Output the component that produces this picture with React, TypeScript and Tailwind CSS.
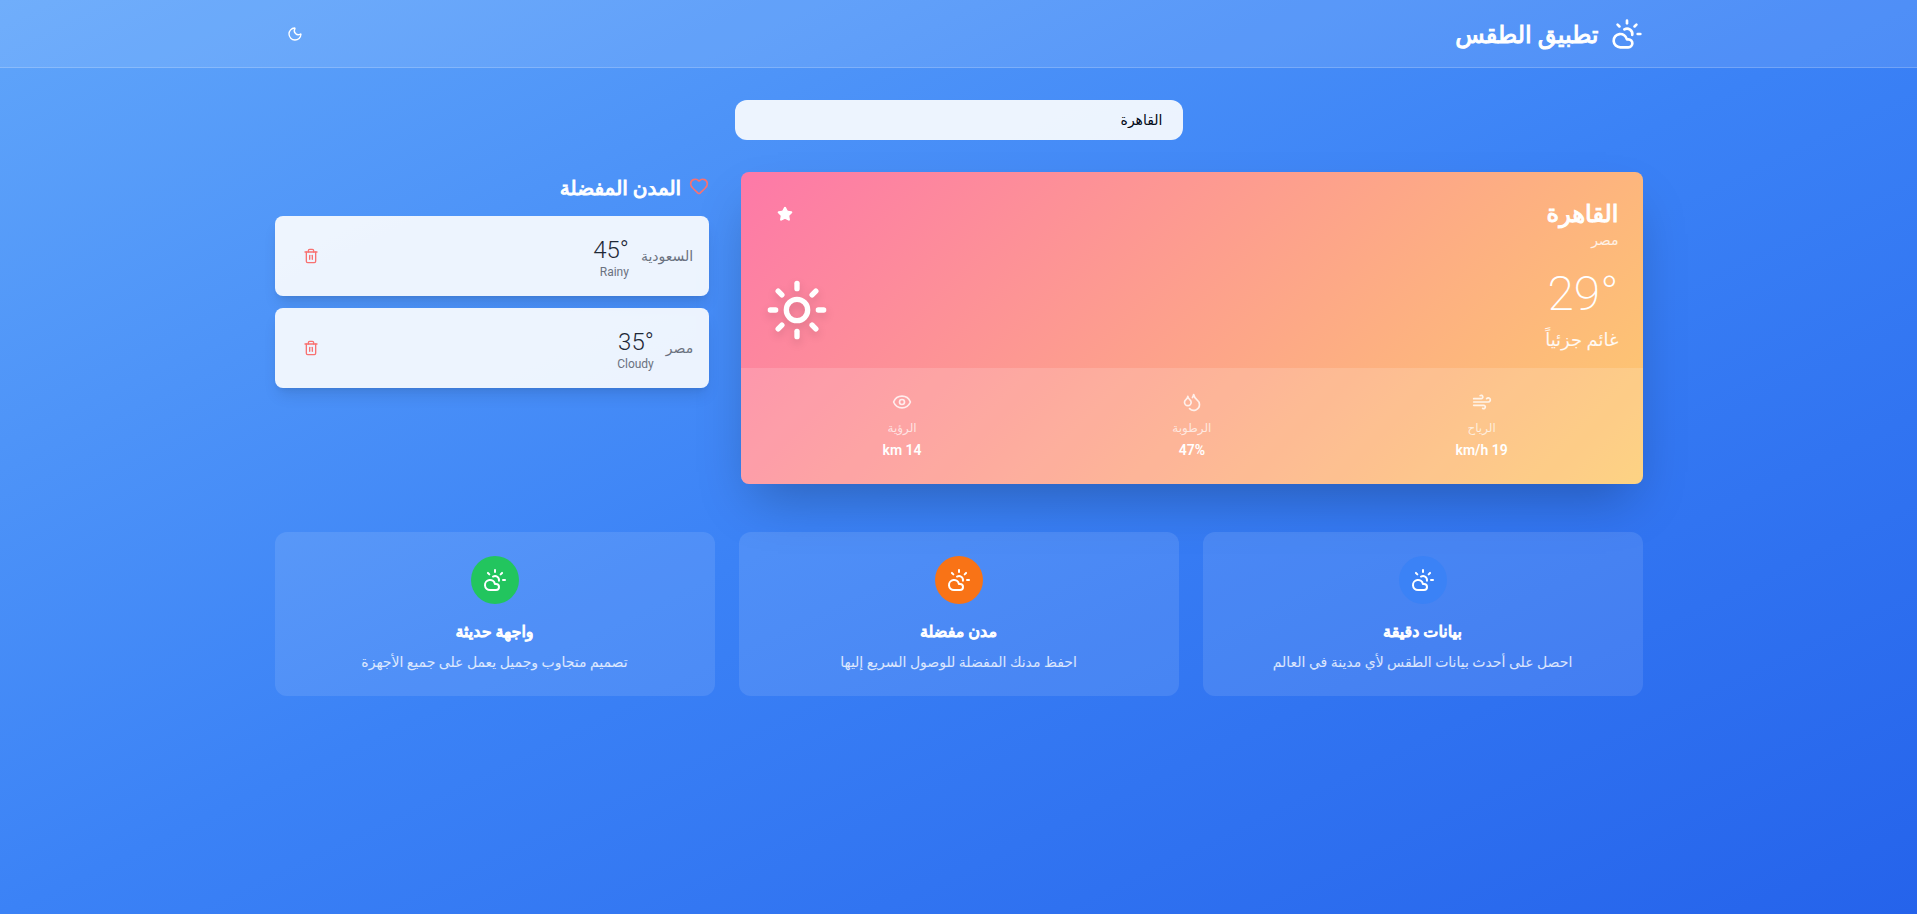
import { useState } from "react";
import { CloudSun, Droplets, Eye, Heart, Moon, Star, Sun, Trash2, Wind } from "lucide-react";

const details = [
  { label: "الرياح", value: "19 km/h", Icon: Wind },
  { label: "الرطوبة", value: "47%", Icon: Droplets },
  { label: "الرؤية", value: "14 km", Icon: Eye },
];

const favorites = [
  { city: "السعودية", temp: 45, condition: "Rainy" },
  { city: "مصر", temp: 35, condition: "Cloudy" },
];

const features = [
  { title: "بيانات دقيقة", text: "احصل على أحدث بيانات الطقس لأي مدينة في العالم", color: "bg-[#3b82f6]" },
  { title: "مدن مفضلة", text: "احفظ مدنك المفضلة للوصول السريع إليها", color: "bg-[#f97316]" },
  { title: "واجهة حديثة", text: "تصميم متجاوب وجميل يعمل على جميع الأجهزة", color: "bg-[#22c55e]" },
];

function Header() {
  return (
    <header className="border-b border-white/20 bg-white/10">
      <div className="mx-auto flex h-[67px] max-w-[1400px] items-center justify-between px-4">
        <div className="flex items-center gap-3">
          <CloudSun className="size-8 text-white" />
          <h1 className="pt-0.5 text-2xl text-white [-webkit-text-stroke:1px]">تطبيق الطقس</h1>
        </div>
        <button type="button" aria-label="الوضع الليلي" className="flex h-9 w-10 items-center justify-center rounded-md text-white">
          <Moon className="size-4" />
        </button>
      </div>
    </header>
  );
}

function WeatherCard() {
  return (
    <section className="overflow-hidden rounded-lg bg-[linear-gradient(135deg,#fd79a8,#fdcb6e)] text-white shadow-2xl lg:col-span-2">
      <div className="flex items-start justify-between px-6 pt-6 pb-3">
        <div>
          <h2 className="pt-0.5 text-2xl leading-8 [-webkit-text-stroke:1px]">القاهرة</h2>
          <p className="text-sm leading-5 text-white/80">مصر</p>
          <p className="mt-4.5 text-5xl leading-13 font-extralight">29°</p>
          <p className="mt-1 text-lg leading-8 text-white/90">غائم جزئياً</p>
        </div>
        <div className="flex flex-col gap-[46px]">
          <button type="button" aria-label="إزالة من المفضلة" className="flex h-9 w-10 items-center justify-center self-end rounded-md">
            <Star className="size-4 fill-current" />
          </button>
          <Sun className="size-16 drop-shadow-lg" />
        </div>
      </div>
      <dl className="grid grid-cols-3 gap-4 bg-white/15 px-6 pt-6 pb-[22px]">
        {details.map(({ label, value, Icon }) => (
          <div key={label} className="flex flex-col items-center">
            <Icon className="size-5 text-white/80" />
            <dt className="mt-1.5 text-xs leading-5 text-white/70">{label}</dt>
            <dd className="text-sm leading-6 font-semibold">{value}</dd>
          </div>
        ))}
      </dl>
    </section>
  );
}

function Favorites() {
  const [items, setItems] = useState(favorites);
  return (
    <section>
      <h2 className="mb-4 flex h-7 items-center gap-2 text-xl text-white">
        <Heart className="size-5 text-[#f87171]" />
        <span className="pt-1 [-webkit-text-stroke:1px]">المدن المفضلة</span>
      </h2>
      <ul className="flex flex-col gap-3">
        {items.map((item) => (
          <li key={item.city} className="flex h-20 items-center justify-between rounded-lg bg-white/90 p-4 shadow-lg">
            <div className="flex items-center gap-3">
              <span className="text-sm text-[#6b7280]">{item.city}</span>
              <div className="pt-1">
                <p className="text-2xl leading-7 font-light text-[#1f2937]">{item.temp}°</p>
                <p className="text-xs leading-4 text-[#6b7280]">{item.condition}</p>
              </div>
            </div>
            <button
              type="button"
              aria-label="حذف"
              onClick={() => setItems(items.filter((other) => other !== item))}
              className="flex h-9 w-10 items-center justify-center rounded-md text-[#f87171]"
            >
              <Trash2 className="size-4" />
            </button>
          </li>
        ))}
      </ul>
    </section>
  );
}

export default function App() {
  const [query, setQuery] = useState("القاهرة");
  return (
    <div
      dir="rtl"
      className="min-h-screen bg-[linear-gradient(to_bottom_right,#60a5fa,#3b82f6,#2563eb)] font-[Roboto,'DejaVu_Sans',sans-serif]"
    >
      <Header />
      <main className="mx-auto max-w-[1400px] px-4 py-8">
        <input
          type="text"
          aria-label="ابحث عن مدينة"
          value={query}
          onChange={(event) => setQuery(event.target.value)}
          className="mx-auto mb-8 block h-10 w-full max-w-md rounded-xl bg-white/90 px-5 text-sm text-[#020817] outline-none"
        />
        <div className="grid items-start gap-8 lg:grid-cols-3">
          <WeatherCard />
          <Favorites />
        </div>
        <div className="mt-12 grid gap-6 md:grid-cols-3">
          {features.map((feature) => (
            <article key={feature.title} className="rounded-xl bg-white/10 p-6 text-center">
              <div className={`mx-auto mb-4 flex size-12 items-center justify-center rounded-full text-white ${feature.color}`}>
                <CloudSun className="size-6" />
              </div>
              <h3 className="mb-2 text-base leading-6 text-white [-webkit-text-stroke:1px]">{feature.title}</h3>
              <p className="text-sm leading-5 text-white/80">{feature.text}</p>
            </article>
          ))}
        </div>
      </main>
    </div>
  );
}
